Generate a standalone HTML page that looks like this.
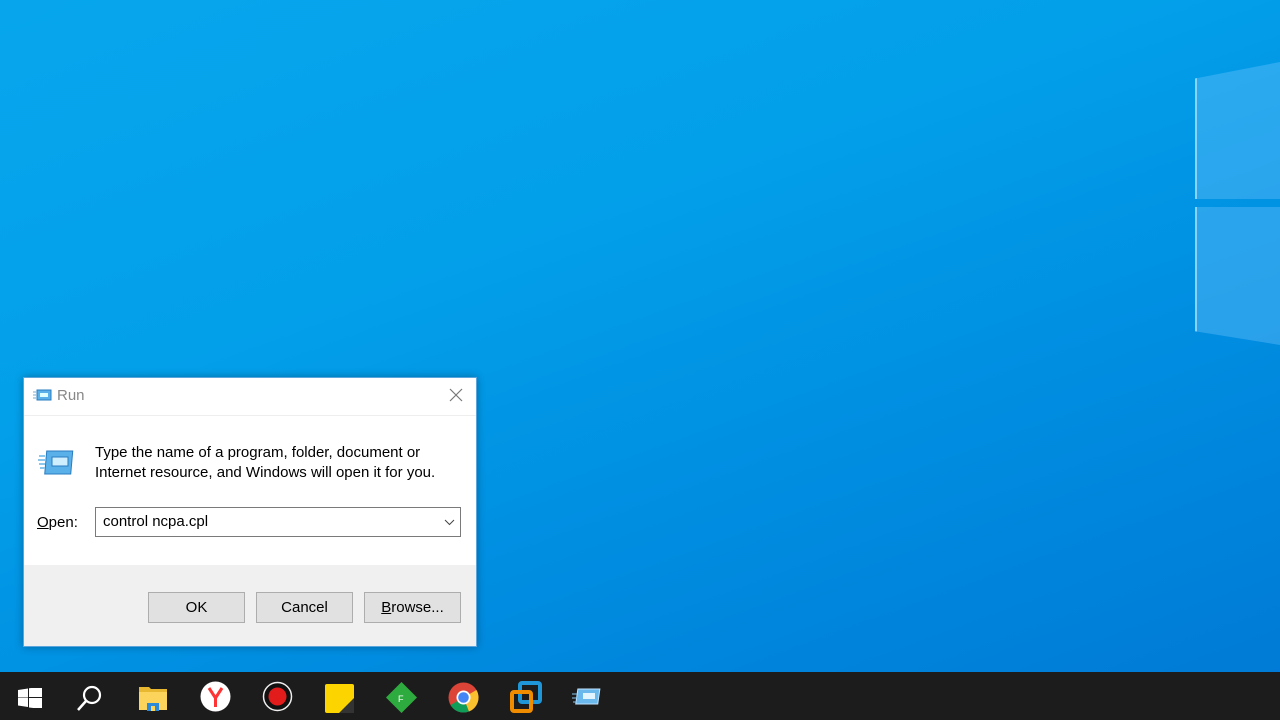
<!DOCTYPE html>
<html><head><style>
*{margin:0;padding:0;box-sizing:border-box}
body{width:1280px;height:720px;overflow:hidden;position:relative;font-family:"Liberation Sans",sans-serif;
background:linear-gradient(160deg,#07a6ec 0%,#03a0ea 35%,#0090e2 60%,#0078d4 100%);}
.pane{position:absolute;background:rgba(120,200,255,.35);border-left:2px solid rgba(180,230,255,.7)}
#dlg{position:absolute;left:23px;top:377px;width:454px;height:270px;background:#fff;border:1px solid #5aa6dc;box-shadow:0 0 8px rgba(0,0,0,.3)}
.t{position:absolute;font-size:15px;color:#000}
.btn{position:absolute;top:214px;width:97px;height:31px;background:#e1e1e1;border:1px solid #adadad;font-size:15px;text-align:center;line-height:29px}
#tb{position:absolute;left:0;top:672px;width:1280px;height:48px;background:#1c1c1c}
.ic{position:absolute;top:10px}
</style></head><body>
<div class="pane" style="left:1195px;top:62px;width:85px;height:137px;clip-path:polygon(0 12%,100% 0,100% 100%,0 100%)"></div>
<div class="pane" style="left:1195px;top:207px;width:85px;height:138px;clip-path:polygon(0 0,100% 0,100% 100%,0 90%)"></div>

<div id="dlg">
 <svg style="position:absolute;left:9px;top:10px" width="20" height="15"><rect x="4" y="2" width="14" height="10" fill="#5ab0e8" stroke="#2a7cc0"/><rect x="7" y="5" width="8" height="4" fill="#dff"/><path d="M0 4h3M0 7h3M0 10h3" stroke="#7ac"/></svg>
 <div class="t" style="left:33px;top:9px;color:#888">Run</div>
 <svg style="position:absolute;left:425px;top:10px" width="14" height="14"><path d="M1 1L13 13M13 1L1 13" stroke="#777" stroke-width="1.2"/></svg>
 <div style="position:absolute;left:0;top:37px;width:452px;border-top:1px solid #eee"></div>
 <svg style="position:absolute;left:13px;top:70px" width="38" height="30"><rect x="10" y="3" width="26" height="23" fill="#5ab0e8" stroke="#2a7cc0" transform="skewX(-5)"/><rect x="15" y="9" width="16" height="9" fill="#cfefff" stroke="#2a7cc0"/><path d="M2 8h6M1 12h7M2 16h6M3 20h5" stroke="#8cc8ee" stroke-width="2"/></svg>
 <div class="t" style="left:71px;top:65px;line-height:20px">Type the name of a program, folder, document or<br>Internet resource, and Windows will open it for you.</div>
 <div class="t" style="left:13px;top:136px"><u>O</u>pen:</div>
 <div style="position:absolute;left:71px;top:129px;width:366px;height:30px;border:1px solid #7a7a7a;background:#fff"><span class="t" style="left:7px;top:5px">control ncpa.cpl</span>
  <svg style="position:absolute;right:5px;top:10px" width="11" height="8"><path d="M1 2l4.5 4.5L10 2" stroke="#444" fill="none"/></svg></div>
 <div style="position:absolute;left:0;top:187px;width:452px;height:81px;background:#f0f0f0"></div>
 <div class="btn" style="left:124px">OK</div>
 <div class="btn" style="left:232px">Cancel</div>
 <div class="btn" style="left:340px"><u>B</u>rowse...</div>
</div>

<div id="tb">
 <svg class="ic" style="left:18px;top:16px" width="24" height="20"><path d="M0 2l10-1.5v9H0zM11 .3L24 -1.5v10.5H11zM0 10h10v9L0 17.5zM11 10h13v11L11 19.5z" fill="#fff"/></svg>
 <svg class="ic" style="left:76px;top:12px" width="28" height="28"><circle cx="16" cy="11" r="8" stroke="#fff" stroke-width="2.2" fill="none"/><path d="M10 17L2 26" stroke="#fff" stroke-width="2.5"/></svg>
 <svg class="ic" style="left:139px;top:13px" width="28" height="26"><path d="M0 2h10l2 2h16v20H0z" fill="#e8b830"/><rect x="0" y="7" width="28" height="18" fill="#fcd45c"/><rect x="8" y="18" width="12" height="8" fill="#2d8ad8"/><rect x="12" y="21" width="4" height="5" fill="#fcd45c"/></svg>
 <svg class="ic" style="left:200px;top:9px" width="31" height="31"><circle cx="15.5" cy="15.5" r="15" fill="#fff"/><path d="M9 7l6.5 10V26M22 7l-6.5 10" stroke="#f33" stroke-width="3" fill="none"/></svg>
 <svg class="ic" style="left:262px;top:9px" width="31" height="31"><circle cx="15.5" cy="15.5" r="14" fill="#111" stroke="#eee" stroke-width="1.5"/><circle cx="15.5" cy="15.5" r="9" fill="#e21b1b"/></svg>
 <svg class="ic" style="left:325px;top:12px" width="29" height="29"><rect width="29" height="29" rx="2" fill="#fcd500"/><path d="M29 14L14 29h15z" fill="#333"/></svg>
 <svg class="ic" style="left:386px;top:10px" width="31" height="31"><path d="M15.5 0L31 15.5 15.5 31 0 15.5z" fill="#2eab3f"/><text x="12" y="20" font-size="9" fill="#fff" font-family="Liberation Sans">F</text></svg>
 <svg class="ic" style="left:448px;top:10px" width="31" height="31"><circle cx="15.5" cy="15.5" r="15" fill="#db4437"/><path d="M15.5 15.5L2.5 23A15 15 0 0 0 21 29.5z" fill="#0f9d58"/><path d="M15.5 15.5L21 29.5A15 15 0 0 0 28.5 8z" fill="#fbc02d"/><circle cx="15.5" cy="15.5" r="7" fill="#fff"/><circle cx="15.5" cy="15.5" r="5.3" fill="#4285f4"/></svg>
 <svg class="ic" style="left:510px;top:9px" width="32" height="32"><rect x="10" y="2" width="20" height="19" rx="2" fill="none" stroke="#1e96d8" stroke-width="4"/><rect x="2" y="11" width="19" height="19" rx="2" fill="none" stroke="#f08c00" stroke-width="4"/></svg>
 <svg class="ic" style="left:572px;top:16px" width="30" height="18"><rect x="6" y="1" width="22" height="15" fill="#6ab8ec" stroke="#bfe4ff" transform="skewX(-8)"/><rect x="11" y="5" width="12" height="6" fill="#e2f5ff"/><path d="M0 6h5M0 10h5M1 14h4" stroke="#8cc8ee"/></svg>
</div>
</body></html>
